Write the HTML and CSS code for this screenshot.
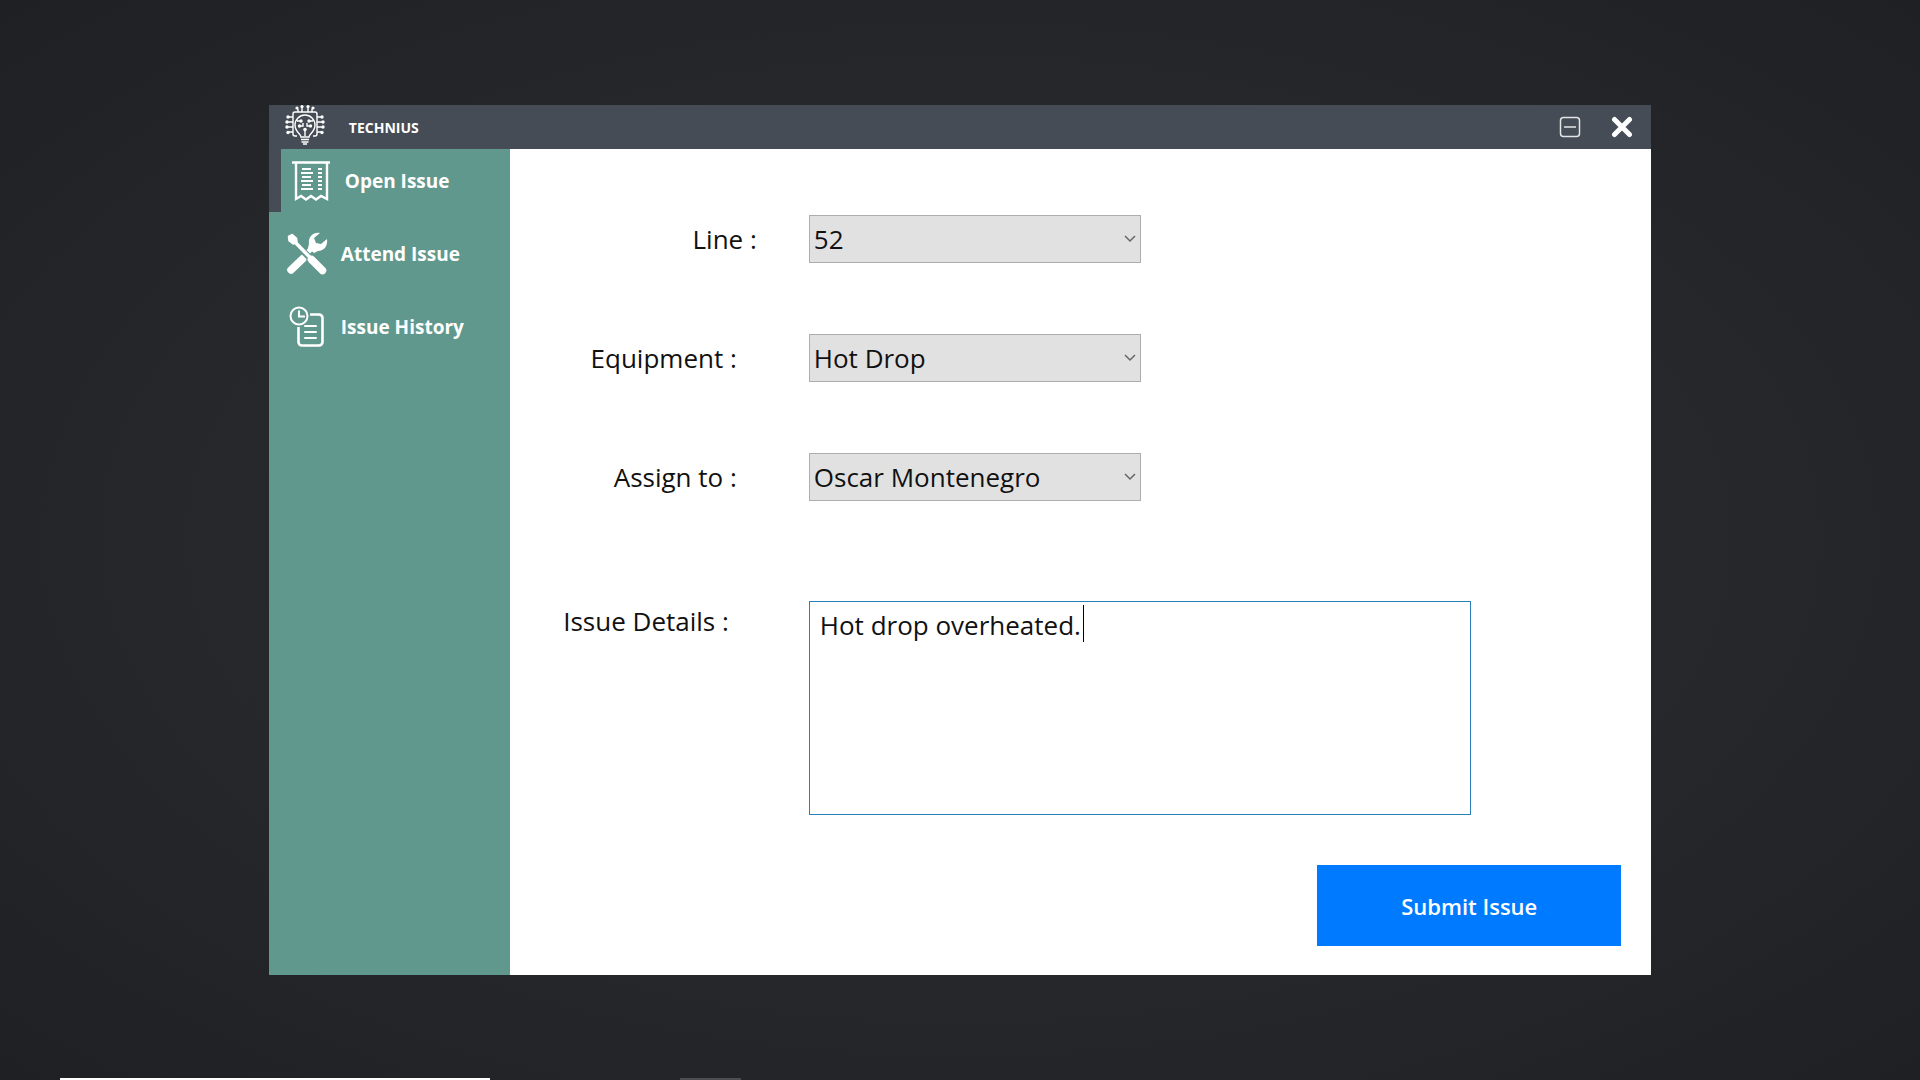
FILE: index.html
```html
<!DOCTYPE html>
<html lang="en">
<head>
<meta charset="utf-8">
<title>Technius</title>
<link rel="stylesheet" href="styles.css">
</head>
<body>
<div class="desktop">
  <div class="window">
    <header class="titlebar">
      <svg class="logo" viewBox="0 0 40 40" fill="none" stroke="currentColor" stroke-width="1.4" aria-hidden="true">
        <path d="M12 31H10a2 2 0 0 1-2-2V9a2 2 0 0 1 2-2h20a2 2 0 0 1 2 2v20a2 2 0 0 1-2 2h-2"/>
        <path d="M13 7V4M17 7V2M23 7V2M27 7V4M8 12H3M8 17H1M8 22H1M8 27H3M32 12h5M32 17h7M32 22h7M32 27h5"/>
        <g fill="currentColor" stroke="none">
          <circle cx="12" cy="3" r="1.6"/><circle cx="17" cy="1.6" r="1.6"/><circle cx="23" cy="1.6" r="1.6"/><circle cx="28" cy="3" r="1.6"/>
          <circle cx="3" cy="12" r="1.7"/><circle cx="2" cy="17" r="1.7"/><circle cx="2" cy="22" r="1.7"/><circle cx="3" cy="27.5" r="1.7"/>
          <circle cx="37" cy="12" r="1.7"/><circle cx="38" cy="17" r="1.7"/><circle cx="38" cy="22" r="1.7"/><circle cx="37" cy="27.5" r="1.7"/>
          <circle cx="16" cy="16" r="1.7"/><circle cx="24" cy="16" r="1.7"/><circle cx="14.5" cy="21" r="1.7"/><circle cx="25.5" cy="21" r="1.7"/><circle cx="20" cy="24.5" r="1.8"/>
        </g>
        <path d="M16 32c0-3-6-5-6-12a10 10 0 0 1 20 0c0 7-6 9-6 12zM16 34.5h8M16.5 37h7M18 39h4M20 25v6M12 16h4M24 16h4M14 21h4v-3M26 21h-4v-3"/>
      </svg>
      <h1 class="title">TECHNIUS</h1>
      <button class="win-btn" type="button" aria-label="Minimize">
        <svg viewBox="0 0 22 22" fill="none" stroke="currentColor"><rect x="1.5" y="1.5" width="19" height="19" rx="3" stroke-width="1.5" opacity=".85"/><path d="M5 11h12" stroke-width="2" opacity=".65"/></svg>
      </button>
      <button class="win-btn" type="button" aria-label="Close">
        <svg viewBox="0 0 22 22" fill="none" stroke="currentColor" stroke-width="5" stroke-linecap="round"><path d="M3.5 3.5l15 15M18.5 3.5l-15 15"/></svg>
      </button>
    </header>
    <div class="body">
      <nav class="sidebar">
        <a class="nav-item active" href="#open">
          <svg viewBox="0 0 48 48" fill="none" stroke="currentColor" aria-hidden="true"><path d="M5 5.5h38" stroke-width="2.5"/><path d="M9 6v36l5-3 5 3.500 5-3.500 5 3.500 5-3.500 6 3V6" stroke-width="2.4"/><path d="M15 12h9M14 16h12M15 20h9M14 24h12M15 28h9M14 32h12M31 12h4M31 16h4M31 20h4M31 24h4M31 28h4M31 32h4" stroke-width="2"/></svg>
          <span>Open Issue</span>
        </a>
        <a class="nav-item" href="#attend">
          <svg viewBox="0 0 48 48" fill="none" stroke="currentColor" stroke-linecap="round" aria-hidden="true"><path d="M8 40L20 28.500" stroke-width="7.5"/><path d="M21 26l7-7" stroke-width="5" stroke-linecap="butt"/><path d="M37 3c-7-1-12 4-11 11l-1 4 6 5 4-2c6 0 10-5 9-12l-6 5-5-1-2-5z" fill="currentColor" stroke="none"/><path d="M18 19l12 12" stroke="#61988e" stroke-width="6.5" stroke-linecap="butt"/><path d="M6 6.500l3-1.500 4 3.500.5 3-3 2-4-3z" fill="currentColor" stroke-width="2.500" stroke-linejoin="round"/><path d="M10 10l18 18.500" stroke-width="3.5"/><path d="M28.500 29.500l11 11" stroke-width="7.5"/></svg>
          <span>Attend Issue</span>
        </a>
        <a class="nav-item" href="#history">
          <svg viewBox="0 0 48 48" fill="none" stroke="currentColor" aria-hidden="true"><circle cx="16" cy="13" r="8.5" stroke-width="2"/><path d="M16 7.500V13.500h6" stroke-width="2"/><path d="M27 11.500h9a3.500 3.500 0 0 1 3.500 3.500v24a3.500 3.500 0 0 1-3.500 3.500H19a3.500 3.500 0 0 1-3.500-3.500V24" stroke-width="2.6"/><path d="M22 23h11M22 29h11M22 35h11" stroke-width="2" stroke-linecap="round"/></svg>
          <span>Issue History</span>
        </a>
      </nav>
      <main class="content">
        <form class="form">
          <label class="label inset-sm" for="line">Line :</label>
          <select class="select" id="line"><option>52</option></select>
          <label class="label inset-md" for="equipment">Equipment :</label>
          <select class="select" id="equipment"><option>Hot Drop</option></select>
          <label class="label inset-md" for="assign">Assign to :</label>
          <select class="select" id="assign"><option>Oscar Montenegro</option></select>
          <label class="label label-top inset-lg" for="details">Issue Details :</label>
          <div class="details">
            <textarea class="textarea" id="details">Hot drop overheated.</textarea>
            <span class="caret"></span>
          </div>
          <button class="submit" type="button">Submit Issue</button>
        </form>
      </main>
    </div>
  </div>
  <div class="strip"><span class="strip-light"></span><span class="strip-dim"></span></div>
</div>
</body>
</html>
```
FILE: styles.css
```css
* { box-sizing: border-box; }

body {
  margin: 0;
  font-family: "Open Sans", "Noto Sans", sans-serif;
  color: #111;
}

.desktop {
  min-height: 100vh;
  display: flex;
  flex-direction: column;
  padding: 105px 14% 0;
  position: relative;
  background: radial-gradient(ellipse at center, #292a2d 0%, #26272a 60%, #1f2023 100%);
}

.window {
  display: flex;
  flex-direction: column;
  min-height: 870px;
  background: #fff;
}

.titlebar {
  display: flex;
  align-items: center;
  height: 44px;
  padding: 0 18px 0 16px;
  background: #454c55;
  color: #fff;
}

.logo { width: 40px; height: 40px; align-self: flex-start; }

.title {
  flex: 1;
  margin: 0 0 0 24px;
  font-size: 14px;
  font-weight: 700;
}

.win-btn {
  display: flex;
  margin-left: 30px;
  padding: 0;
  border: 0;
  background: none;
  color: #fff;
}

.win-btn svg { width: 22px; height: 22px; }

.body { flex: 1; display: flex; }

.sidebar {
  flex: 0 0 241px;
  display: flex;
  flex-direction: column;
  gap: 10px;
  background: #61988e;
}

.nav-item {
  display: flex;
  align-items: center;
  gap: 10px;
  height: 63px;
  padding-left: 14px;
  color: #fff;
  font-size: 19px;
  font-weight: 700;
  text-decoration: none;
}

.nav-item svg { width: 48px; height: 48px; }

.nav-item.active {
  padding-left: 6px;
  border-left: 12px solid #454c55;
}

.content { flex: 1; padding: 66px 30px 28px 0; }

.form {
  display: grid;
  grid-template-columns: 299px 1fr;
  row-gap: 71px;
}

.label {
  align-self: center;
  text-align: right;
  font-size: 26px;
  line-height: 36px;
}

.label-top { align-self: start; margin-top: 31px; }
.inset-sm { padding-right: 52px; }
.inset-md { padding-right: 72px; }
.inset-lg { padding-right: 80px; }

.select {
  width: 332px;
  height: 48px;
  padding: 0 32px 0 4px;
  border: 1px solid #adadad;
  border-radius: 0;
  appearance: none;
  background: #e1e1e1 url("data:image/svg+xml,%3Csvg xmlns='http://www.w3.org/2000/svg' viewBox='0 0 12 8' fill='none' stroke='%23666' stroke-width='1.5'%3E%3Cpath d='M1 1l5 5 5-5'/%3E%3C/svg%3E") no-repeat right 4px center / 12px 8px;
  color: #111;
  font: inherit;
  font-size: 26px;
}

.details { position: relative; margin: 29px 150px 0 0; }

.textarea {
  display: block;
  width: 100%;
  height: 214px;
  padding: 5px 10px;
  border: 1px solid #2a7fb8;
  outline: 0;
  resize: none;
  color: #111;
  font: inherit;
  font-size: 26px;
  line-height: 36px;
}

.caret {
  position: absolute;
  left: 274px;
  top: 4px;
  width: 1px;
  height: 37px;
  background: #000;
}

.submit {
  grid-column: 2;
  justify-self: end;
  width: 304px;
  height: 81px;
  margin-top: -21px;
  border: 0;
  background: #007bff;
  color: #fff;
  font: inherit;
  font-size: 22px;
  font-weight: 600;
}

/* Top edge of the taskbar along the bottom of the desktop */
.strip {
  position: absolute;
  left: 60px;
  bottom: 0;
  display: flex;
  gap: 190px;
}

.strip-light { width: 430px; height: 2px; background: #fff; }
.strip-dim { width: 61px; height: 2px; background: #4d4c50; }
```
